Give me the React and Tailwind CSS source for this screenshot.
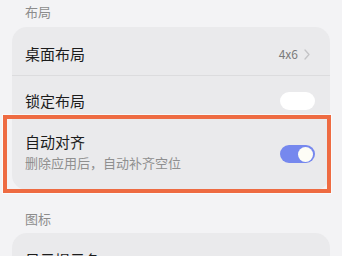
import React from "react";

const font = { fontFamily: '"Noto Sans CJK SC", "Noto Sans", sans-serif' };

function Toggle({ on }) {
  return on ? (
    <div className="w-[35px] h-[18px] rounded-full bg-[#7688ee] flex items-center justify-end px-[2px]">
      <div className="w-[15px] h-[15px] rounded-full bg-[#fdfdf6]" />
    </div>
  ) : (
    <div className="w-[35px] h-[18px] rounded-full bg-white" />
  );
}

export default function App() {
  return (
    <div className="w-[342px] h-[256px] overflow-hidden bg-[#f3f3f5] relative" style={font}>
      <div className="pl-[25px] pt-[3px] h-[27px] text-[13px] leading-[18px] text-[#8c8c8c]">布局</div>
      <div className="mx-[12px] rounded-[15px] bg-[#eaeaec]">
        <div className="h-[49px] flex items-center justify-between pl-[13px] pr-[20px] pt-[6px] border-b border-[#dcdcde]">
          <span className="text-[15px] text-[#1c1c1c]">桌面布局</span>
          <div className="flex items-center gap-[6px]">
            <span className="text-[12px] text-[#7a7a7a]">4x6</span>
            <svg width="6" height="11" viewBox="0 0 6 11" fill="none">
              <path d="M1 1l4 4.5L1 10" stroke="#c4c4c6" strokeWidth="1.3" strokeLinecap="round" strokeLinejoin="round" />
            </svg>
          </div>
        </div>
        <div className="h-[48px] flex items-center justify-between pl-[13px] pr-[15px] pt-[2px]">
          <span className="text-[15px] text-[#1c1c1c]">锁定布局</span>
          <Toggle on={false} />
        </div>
        <div className="h-[66px] flex items-start justify-between pl-[13px] pr-[15px]">
          <div className="flex flex-col pt-[7px]">
            <span className="text-[15px] leading-[21px] text-[#1c1c1c]">自动对齐</span>
            <span className="text-[13px] leading-[18px] mt-[2px] text-[#8f8f8f]">删除应用后，自动补齐空位</span>
          </div>
          <div className="mt-[21px]">
            <Toggle on={true} />
          </div>
        </div>
      </div>
      <div className="pl-[25px] pt-[20px] h-[43px] text-[13px] leading-[18px] text-[#8c8c8c]">图标</div>
      <div className="mx-[12px] rounded-[15px] bg-[#eaeaec] h-[60px] pl-[13px] pt-[14px]">
        <span className="text-[15px] text-[#1c1c1c]">显示提示条</span>
      </div>
      <div className="absolute left-[3px] top-[115px] w-[328px] h-[78px] border-[4px] border-[#ee6b42] shadow-[0_0_0_1px_rgba(255,255,255,0.6)]" />
    </div>
  );
}
